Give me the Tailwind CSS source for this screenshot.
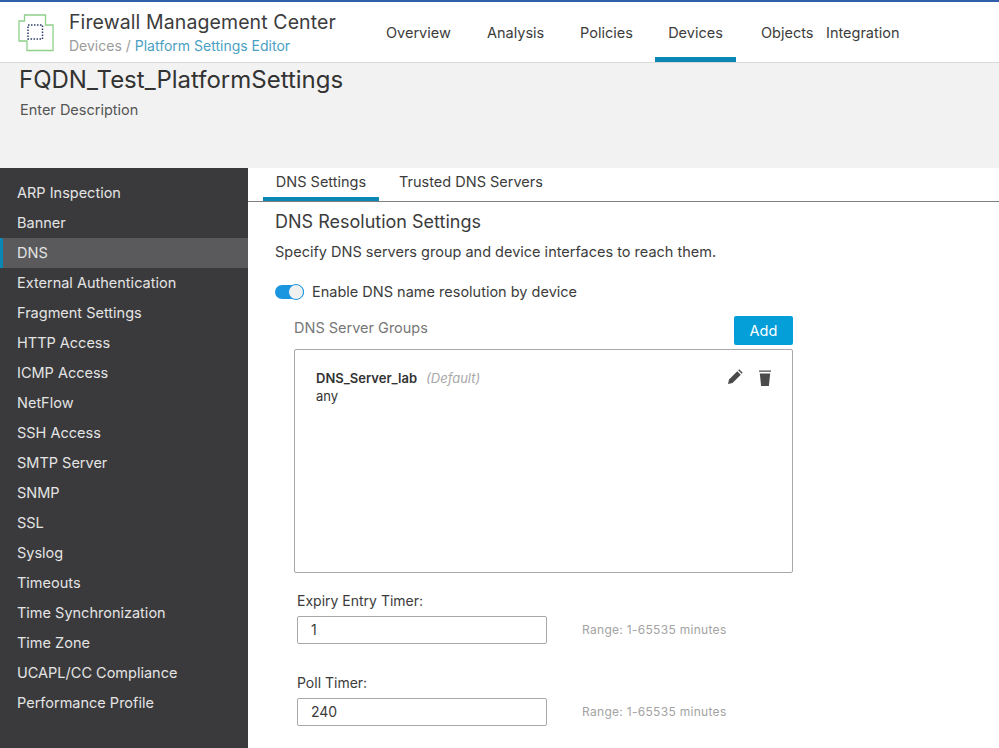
<!DOCTYPE html>
<html lang="en">
<head>
    <meta charset="UTF-8">
    <title>Firewall Management Center</title>
    <script src="https://cdn.jsdelivr.net/npm/@tailwindcss/browser@4"></script>
</head>
<body class="bg-white font-['Inter',sans-serif] antialiased">
    <div class="h-[748px] w-[999px] overflow-hidden flex flex-col relative">
        <header class="h-[63px] shrink-0 bg-white border-t-2 border-[#2f5fa8] border-b border-b-[#d9d9d9] flex relative z-10">
            <div class="w-[69px] shrink-0 pl-[18px] pt-[12px]">
                <svg width="36" height="38" viewBox="0 0 36 38" fill="none">
                    <path d="M6.5 1H27.5V11H35V36.5H9V27H1V7H6.5Z" stroke="#8fd08a" stroke-width="1.3" fill="#fff"/>
                    <rect x="10" y="11" width="14.500" height="14" stroke="#2b3a6b" stroke-width="1.500" stroke-dasharray="1.500 1.500"/>
                </svg>
            </div>
            <div class="w-[317px] shrink-0 pt-[7px]">
                <div class="text-[19.5px] leading-[26px] text-[#3c3c3c] tracking-[0.1px]">Firewall Management Center</div>
                <div class="text-[14px] leading-[20px] mt-[1px] text-[#9b9b9b]">Devices / <span class="text-[#4a9fc4]">Platform Settings Editor</span></div>
            </div>
            <nav class="flex text-[14.5px] text-[#3c3c3c]">
                <a class="w-[101px] pt-[20px] text-left">Overview</a>
                <a class="w-[93px] pt-[20px] text-left">Analysis</a>
                <a class="w-[75px] pt-[20px] text-left">Policies</a>
                <a class="w-[81px] -mt-0 h-[60px] pt-[20px] text-center border-b-[5px] border-[#0a86b4]">Devices</a>
                <a class="w-[90px] pt-[20px] pl-[25px]">Objects</a>
                <a class="pt-[20px] pl-[0px]">Integration</a>
            </nav>
        </header>

        <div class="h-[105px] shrink-0 bg-[#f2f2f2] pl-[19px]">
            <h1 class="text-[24px] leading-[32px] pt-[1px] text-[#333333] h-[33px]">FQDN_Test_PlatformSettings</h1>
            <p class="text-[14.5px] leading-[20px] mt-[4px] pl-[1px] text-[#555555]">Enter Description</p>
        </div>

        <div class="flex flex-1 min-h-0">
            <aside class="w-[248px] shrink-0 bg-[#3a3a3c] pt-[10px] text-[14.500px] text-[#e4e4e4]">
                <div class="h-[30px] leading-[30px] pl-[17px]">ARP Inspection</div>
                <div class="h-[30px] leading-[30px] pl-[17px]">Banner</div>
                <div class="h-[30px] leading-[30px] pl-[14px] bg-[#5a5a5c] border-l-[3px] border-[#0a86b4]">DNS</div>
                <div class="h-[30px] leading-[30px] pl-[17px]">External Authentication</div>
                <div class="h-[30px] leading-[30px] pl-[17px]">Fragment Settings</div>
                <div class="h-[30px] leading-[30px] pl-[17px]">HTTP Access</div>
                <div class="h-[30px] leading-[30px] pl-[17px]">ICMP Access</div>
                <div class="h-[30px] leading-[30px] pl-[17px]">NetFlow</div>
                <div class="h-[30px] leading-[30px] pl-[17px]">SSH Access</div>
                <div class="h-[30px] leading-[30px] pl-[17px]">SMTP Server</div>
                <div class="h-[30px] leading-[30px] pl-[17px]">SNMP</div>
                <div class="h-[30px] leading-[30px] pl-[17px]">SSL</div>
                <div class="h-[30px] leading-[30px] pl-[17px]">Syslog</div>
                <div class="h-[30px] leading-[30px] pl-[17px]">Timeouts</div>
                <div class="h-[30px] leading-[30px] pl-[17px]">Time Synchronization</div>
                <div class="h-[30px] leading-[30px] pl-[17px]">Time Zone</div>
                <div class="h-[30px] leading-[30px] pl-[17px]">UCAPL/CC Compliance</div>
                <div class="h-[30px] leading-[30px] pl-[17px]">Performance Profile</div>
            </aside>

            <main class="flex-1 min-w-0 bg-white">
                <div class="h-[34px] border-b border-[#808080] flex text-[14.5px] text-[#3c3c3c]">
                    <div class="ml-[15px] w-[116px] h-[33px] text-center leading-[28px] border-b-[4px] border-[#0a86b4]">DNS Settings</div>
                    <div class="ml-[20px] leading-[28px]">Trusted DNS Servers</div>
                </div>
                <div class="pl-[27px]">
                    <h2 class="text-[18px] leading-[24px] mt-[8px] text-[#3c3c3c]">DNS Resolution Settings</h2>
                    <p class="text-[14.5px] leading-[20px] mt-[8px] text-[#3c3c3c]">Specify DNS servers group and device interfaces to reach them.</p>
                    <div class="flex items-center mt-[20px] h-[20px]">
                        <div class="w-[29px] h-[14px] rounded-full bg-[#1a96e0] relative">
                            <div class="absolute right-0 top-[-1px] w-[16px] h-[16px] rounded-full bg-[#f0f0f0] border border-[#1a96e0]"></div>
                        </div>
                        <span class="ml-[8px] text-[14.5px] text-[#3c3c3c]">Enable DNS name resolution by device</span>
                    </div>
                    <div class="w-[499px] ml-[19px] mt-[13px]">
                        <div class="flex justify-between items-end h-[30px]">
                            <span class="text-[14.5px] leading-[20px] mb-[7px] text-[#777777]">DNS Server Groups</span>
                            <button class="w-[59px] h-[29px] rounded-[2px] bg-[#049fd9] text-white text-[14.5px]">Add</button>
                        </div>
                        <div class="mt-[4px] h-[224px] border border-[#a8a8a8] rounded-[2px] pl-[21px] pr-[20px] pt-[19px] flex justify-between">
                            <div>
                                <div class="text-[13px] leading-[18px] text-[#333333]"><b class="font-semibold">DNS_Server_lab</b><i class="ml-[9px] text-[#a8a8a8]">(Default)</i></div>
                                <div class="text-[13px] leading-[18px] text-[#333333]">any</div>
                            </div>
                            <div class="flex gap-[15px] h-[18px]">
                                <svg width="16" height="16" viewBox="0 0 16 16" fill="#4a4a4a"><path d="M1 15l1-4.500 8.300-8.300 3.500 3.500L5.500 14z M11.200 1.300l1-1 3.500 3.500-1 1z"/></svg>
                                <svg width="14" height="18" viewBox="0 0 14 18" fill="#4a4a4a"><path d="M1 1.500h12v1.200H1z M1.800 4.500h10.400l-1.300 12.500H3.100z"/></svg>
                            </div>
                        </div>
                    </div>
                    <div class="ml-[22px]">
                        <label class="block text-[14px] leading-[20px] mt-[18px] text-[#3c3c3c]">Expiry Entry Timer:</label>
                        <div class="flex items-center mt-[5px]">
                            <div class="w-[250px] h-[28px] border border-[#a8a8a8] rounded-[2px] pl-[13px] text-[14px] leading-[26px] text-[#3c3c3c]">1</div>
                            <span class="ml-[35px] text-[12px] tracking-[0.3px] text-[#a3a3a3]">Range: 1-65535 minutes</span>
                        </div>
                        <label class="block text-[14px] leading-[20px] mt-[29px] text-[#3c3c3c]">Poll Timer:</label>
                        <div class="flex items-center mt-[5px]">
                            <div class="w-[250px] h-[28px] border border-[#a8a8a8] rounded-[2px] pl-[13px] text-[14px] leading-[26px] text-[#3c3c3c]">240</div>
                            <span class="ml-[35px] text-[12px] tracking-[0.3px] text-[#a3a3a3]">Range: 1-65535 minutes</span>
                        </div>
                    </div>
                </div>
            </main>
        </div>
    </div>
</body>
</html>
